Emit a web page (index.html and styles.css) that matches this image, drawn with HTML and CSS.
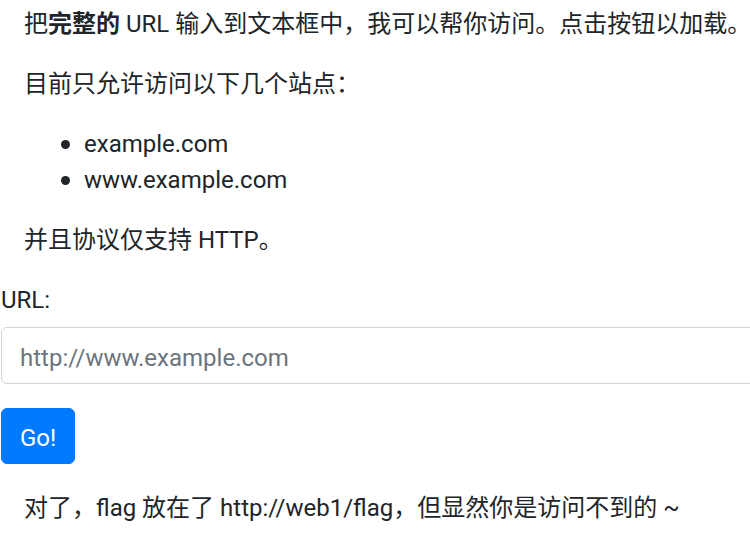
FILE: index.html
```html
<!DOCTYPE html>
<html lang="zh">
<head>
<meta charset="utf-8">
<title>URL</title>
<link rel="stylesheet" href="styles.css">
</head>
<body>
<div class="intro">
  <p>把<strong>完整的</strong> URL 输入到文本框中，我可以帮你访问。点击按钮以加载。</p>
  <p>目前只允许访问以下几个站点：</p>
  <ul class="sites">
    <li>example.com</li>
    <li>www.example.com</li>
  </ul>
  <p>并且协议仅支持 HTTP。</p>
</div>
<form class="form">
  <div class="form-group">
    <label class="label" for="url">URL:</label>
    <input class="input" id="url" type="text" placeholder="http://www.example.com">
  </div>
  <button class="btn" type="button">Go!</button>
</form>
<div class="outro">
  <p>对了，flag 放在了 http://web1/flag，但显然你是访问不到的 ~</p>
</div>
</body>
</html>
```

FILE: styles.css
```css
html, body {
  margin: 0;
  padding: 0;
  background: #fff;
}
body {
  font-family: Roboto, "Noto Sans CJK SC", sans-serif;
  font-size: 24px;
  line-height: 1.5;
  color: #212529;
  overflow: hidden;
}
p {
  margin: 0 0 24px 0;
  white-space: nowrap;
}
.intro {
  padding: 6px 0 0 24px;
}
.sites {
  margin: 0 0 24px 0;
  padding-left: 60px;
  list-style: none;
}
.sites li {
  position: relative;
}
.sites li::before {
  content: "";
  position: absolute;
  left: -23px;
  top: 14px;
  width: 9px;
  height: 9px;
  border-radius: 50%;
  background: #212529;
}
strong {
  font-weight: 700;
}
.form {
  padding-left: 1px;
  margin: 0;
}
.form-group {
  margin-bottom: 24px;
}
.label {
  display: inline-block;
  margin-bottom: 9px;
}
.input {
  display: block;
  box-sizing: border-box;
  width: 800px;
  height: 57px;
  padding: 11px 18px 7px;
  font-family: inherit;
  font-size: 24px;
  line-height: 1.5;
  color: #495057;
  background: #fff;
  border: 1px solid #ced4da;
  border-radius: 6px;
}
.input::placeholder {
  color: #6c757d;
  opacity: 1;
}
.btn {
  display: inline-block;
  box-sizing: border-box;
  height: 56px;
  padding: 11px 18px 7px;
  font-family: inherit;
  font-size: 24px;
  line-height: 1.5;
  color: #fff;
  background: #007bff;
  border: 1px solid #007bff;
  border-radius: 6px;
}
.outro {
  padding: 26px 0 0 24px;
}
```
